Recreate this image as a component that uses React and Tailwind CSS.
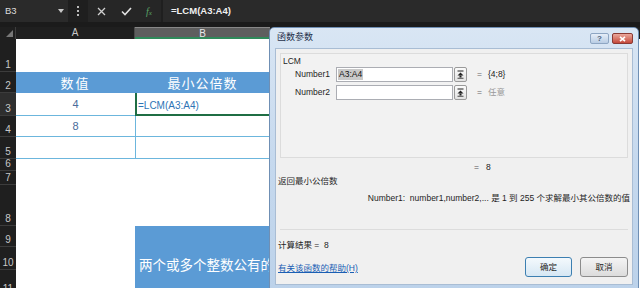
import React from 'react'

const sheetFont = { fontFamily: '"Liberation Sans", "Noto Sans CJK SC", sans-serif' }
const dlgFont = { fontFamily: '"Liberation Sans", "Noto Sans CJK SC", sans-serif' }

const rows = [
  { n: '1', h: 'h-[33px]' },
  { n: '2', h: 'h-[21px]' },
  { n: '3', h: 'h-[23px]' },
  { n: '4', h: 'h-[21px]' },
  { n: '5', h: 'h-[22px]' },
  { n: '6', h: 'h-[12px]' },
  { n: '7', h: 'h-[14px]' },
  { n: '8', h: 'h-[41px]' },
]

const RowHead = ({ n, active }) => (
  <div
    className={`w-[16px] shrink-0 flex items-end justify-center border-b border-[#3c3c3c] text-[10px] leading-[12px] text-[#c8c8c8] ${active ? 'bg-[#2e2e2e]' : 'bg-[#1f1f1f]'}`}
  >
    {n}
  </div>
)

const RowHeadFill = ({ n }) => (
  <div className="h-full flex items-end justify-center border-b border-[#3c3c3c] text-[10px] leading-[12px] text-[#c8c8c8] bg-[#1f1f1f]">
    {n}
  </div>
)

const CollapseBtn = () => (
  <div className="w-[13px] h-[15px] ml-[1px] border border-[#9a9a9a] rounded-[2px] bg-gradient-to-b from-[#fbfbfb] to-[#e2e2e2] flex items-center justify-center">
    <svg width="7" height="9" viewBox="0 0 7 9">
      <rect x="0.5" y="0.5" width="6" height="1" fill="#222" />
      <path d="M3.5 2.5 L6.5 5.5 L0.5 5.5 Z" fill="#222" />
      <rect x="2.5" y="5.5" width="2" height="2" fill="#222" />
      <rect x="0.5" y="7.8" width="6" height="0.8" fill="#222" />
    </svg>
  </div>
)

const ArgRow = ({ label, value, result, muted }) => (
  <div className="flex items-center h-[15px]">
    <div className="w-[48px] text-right pr-[6px] text-[#1e1e1e]">{label}</div>
    <div className="w-[117px] h-[15px] bg-white border border-[#abadb3] flex items-center pl-[1px]">
      {value && <span className="bg-[#c9c9c9] px-[1px] text-[#111] leading-[11px]">{value}</span>}
    </div>
    <CollapseBtn />
    <span className="ml-[10px] text-[#666]">=</span>
    <span className={`ml-[6px] ${muted ? 'text-[#9a9a9a]' : 'text-[#222]'}`}>{result}</span>
  </div>
)

const Dialog = () => (
  <div
    className="absolute left-[269px] top-[27px] w-[370px] h-[263px] rounded-t-[5px] border border-[#6f8fb4] bg-gradient-to-b from-[#d9e6f4] via-[#c6d9ee] to-[#bcd2ea] text-[8.5px]"
    style={dlgFont}
  >
    <div className="h-[20px] flex items-center pl-[7px] pr-[5px]">
      <span className="text-[#1e2f4a] text-[9px]">函数参数</span>
      <div className="ml-auto flex items-center gap-[3px] mt-[1px]">
        <div className="w-[19px] h-[11px] rounded-[2px] border border-[#8ea6c3] bg-gradient-to-b from-[#e6eef8] to-[#b9cde4] flex items-center justify-center text-[8px] font-bold text-[#4b5f7a] leading-none">?</div>
        <div className="w-[21px] h-[11px] rounded-[2px] border border-[#8a3a34] bg-gradient-to-b from-[#e9a79c] to-[#c4473a] flex items-center justify-center">
          <svg width="7" height="6" viewBox="0 0 7 6">
            <path d="M1 0.8 L6 5.2 M6 0.8 L1 5.2" stroke="#fff" strokeWidth="1.6" />
          </svg>
        </div>
      </div>
    </div>
    <div className="mx-[5px] h-[237px] bg-[#f0f0f0] border border-[#a9bdd4] flex flex-col">
      <div className="mt-[4px] mx-[4px] h-[105px] border border-[#dcdcdc] bg-[#f2f2f2] flex flex-col">
        <div className="pl-[2px] pt-[1px] h-[13px] text-[#1e1e1e]">LCM</div>
        <div className="flex flex-col gap-[3px] pl-[7px]">
          <ArgRow label="Number1" value="A3:A4" result="{4;8}" />
          <ArgRow label="Number2" result="任意" muted />
        </div>
      </div>
      <div className="h-[17px] flex items-center pl-[198px] pt-[2px] text-[#222]">
        <span className="text-[#555]">=</span>
        <span className="ml-[7px]">8</span>
      </div>
      <div className="h-[12px] pl-[2px] text-[#1e1e1e]">返回最小公倍数</div>
      <div className="h-[22px] flex items-center justify-end pr-[2px] text-[#1e1e1e] whitespace-nowrap">
        Number1:&nbsp;&nbsp;number1,number2,... 是 1 到 255 个求解最小其公倍数的值
      </div>
      <div className="mt-[20px] mx-[4px] border-t border-[#dcdcdc]" />
      <div className="mt-[9px] h-[12px] pl-[2px] text-[#1e1e1e]">计算结果 =&nbsp;&nbsp;8</div>
      <div className="mt-[6px] flex items-start pl-[2px] pr-[4px]">
        <span className="mt-[5px] text-[#1a5fb4] underline">有关该函数的帮助(H)</span>
        <div className="ml-auto flex gap-[8px]">
          <div className="w-[47px] h-[20px] rounded-[3px] border border-[#3c7fb1] bg-gradient-to-b from-[#f4f9fd] to-[#d6e7f4] flex items-center justify-center text-[#1e1e1e]">确定</div>
          <div className="w-[48px] h-[20px] rounded-[3px] border border-[#8c8c8c] bg-gradient-to-b from-[#f4f4f4] to-[#dcdcdc] flex items-center justify-center text-[#1e1e1e]">取消</div>
        </div>
      </div>
    </div>
  </div>
)

export default function App() {
  return (
    <div className="relative w-[640px] h-[288px] overflow-hidden bg-[#1f1f1f]" style={sheetFont}>
      {/* formula bar */}
      <div className="h-[22px] flex items-stretch bg-[#1f1f1f]">
        <div className="w-[68px] bg-[#2a2a2a] flex items-center justify-between pl-[5px] pr-[4px]">
          <span className="text-[9.5px] text-[#dcdcdc]">B3</span>
          <svg width="6" height="4" viewBox="0 0 6 4"><path d="M0 0 L6 0 L3 4 Z" fill="#c8c8c8" /></svg>
        </div>
        <div className="w-[20px] flex items-center justify-center">
          <svg width="2" height="10" viewBox="0 0 2 10">
            <rect x="0" y="0" width="2" height="2" fill="#bbb" />
            <rect x="0" y="4" width="2" height="2" fill="#bbb" />
            <rect x="0" y="8" width="2" height="2" fill="#bbb" />
          </svg>
        </div>
        <div className="w-[73px] bg-[#262626] flex items-center justify-around px-[2px]">
          <svg width="9" height="9" viewBox="0 0 9 9"><path d="M1 1 L8 8 M8 1 L1 8" stroke="#d0d0d0" strokeWidth="1.3" /></svg>
          <svg width="11" height="9" viewBox="0 0 11 9"><path d="M1 4.5 L4 7.5 L10 1" stroke="#e0e0e0" strokeWidth="1.6" fill="none" /></svg>
          <span className="text-[10px] italic text-[#5aa468]" style={{ fontFamily: '"Liberation Serif", serif' }}>f<span className="text-[7px]">x</span></span>
        </div>
        <div className="flex-1 ml-[2px] bg-[#2a2a2a] flex items-center pl-[8px]">
          <span className="text-[9.5px] font-bold text-[#f0f0f0]">=LCM(A3:A4)</span>
        </div>
      </div>
      <div className="h-[5px] bg-[#1b1b1b]" />

      {/* column headers */}
      <div className="h-[12px] flex text-[10px] leading-[12px] text-[#c8c8c8]">
        <div className="w-[16px] flex items-end justify-end pr-[2px] pb-[2px] border-r border-[#3c3c3c]">
          <svg width="7" height="7" viewBox="0 0 7 7"><path d="M7 0 L7 7 L0 7 Z" fill="#777" /></svg>
        </div>
        <div className="w-[119px] text-center bg-[#1f1f1f] border-r border-[#4a4a4a]">A</div>
        <div className="w-[135px] text-center bg-[#5e5e5e] border-t border-[#888] border-b-2 border-b-[#2f8a5a] text-[#e6e6e6]">B</div>
        <div className="flex-1" />
      </div>

      {/* rows */}
      <div className="flex flex-col">
        {rows.map((r) => (
          <div key={r.n} className={`flex ${r.h}`}>
            <RowHead n={r.n} active={r.n === '3'} />
            {r.n === '2' ? (
              <>
                <div className="w-[119px] bg-[#5b9bd5] text-white text-[13px] flex items-center justify-center tracking-[2px]" style={{ fontFamily: '"Noto Sans CJK SC", sans-serif' }}>数值</div>
                <div className="w-[135px] bg-[#5b9bd5] text-white text-[13px] flex items-center justify-center tracking-[1px]" style={{ fontFamily: '"Noto Sans CJK SC", sans-serif' }}>最小公倍数</div>
                <div className="flex-1 bg-white" />
              </>
            ) : r.n === '3' || r.n === '4' || r.n === '5' ? (
              <>
                <div className="w-[119px] bg-white border-b border-[#6cb6dd] flex items-center justify-center text-[11px] text-[#4a6c9b]">
                  {r.n === '3' ? '4' : r.n === '4' ? '8' : ''}
                </div>
                <div
                  className={`w-[135px] bg-white flex items-end pb-[1px] text-[10px] text-[#2e74b5] ${r.n === '3' ? 'border-l-2 border-b-2 border-[#1f6e44]' : 'border-l border-l-[#6cb6dd] border-b border-[#6cb6dd]'}`}
                >
                  {r.n === '3' ? <span className="pl-[1px]">=LCM(A3:A4)</span> : null}
                </div>
                <div className="flex-1 bg-white" />
              </>
            ) : (
              <div className="flex-1 bg-white" />
            )}
          </div>
        ))}
        {/* rows 9-11, merged blue cell in B */}
        <div className="flex h-[70px]">
          <div className="w-[16px] shrink-0 flex flex-col">
            <div className="h-[21px]"><RowHeadFill n="9" /></div>
            <div className="h-[23px]"><RowHeadFill n="10" /></div>
            <div className="h-[26px]"><RowHeadFill n="11" /></div>
          </div>
          <div className="w-[119px] bg-white" />
          <div className="w-[135px] bg-[#5b9bd5] flex items-center pt-[6px] pl-[4px] overflow-hidden whitespace-nowrap text-white text-[13.5px]" style={{ fontFamily: '"Noto Sans CJK SC", sans-serif' }}>
            两个或多个整数公有的
          </div>
          <div className="flex-1 bg-white" />
        </div>
      </div>

      <Dialog />
    </div>
  )
}
